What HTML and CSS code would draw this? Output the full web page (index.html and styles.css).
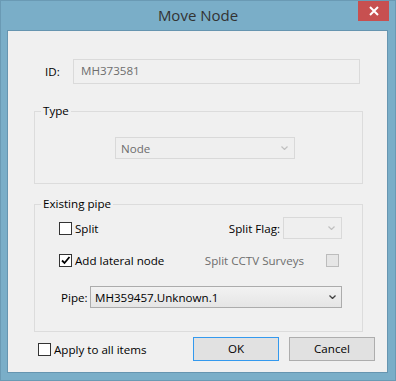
FILE: index.html
```html
<!DOCTYPE html>
<html lang="en">

<head>
    <meta charset="UTF-8">
    <meta name="viewport" content="width=device-width, initial-scale=1.0">
    <title>Move Node</title>
    <link rel="stylesheet" href="styles.css">
</head>

<body>

    <div class="window">
        <div class="titlebar">
            <div class="title">Move Node</div>
            <div class="close">
                <svg width="10" height="10" viewBox="0 0 10 10">
                    <path d="M1 1 L9 9 M9 1 L1 9" stroke="#fff" stroke-width="2" fill="none" />
                </svg>
            </div>
        </div>

        <div class="client">
            <div class="id-row">
                <span class="id-label">ID:</span>
                <div class="textbox disabled">MH373581</div>
            </div>

            <div class="group group-type">
                <span class="legend">Type</span>
                <div class="combo disabled type-combo">
                    <span>Node</span>
                    <svg class="arrow" width="7" height="4" viewBox="0 0 7 4">
                        <path d="M0.5 0.5 L3.5 3.5 L6.5 0.5" stroke="#c0c0c0" stroke-width="1.2" fill="none" />
                    </svg>
                </div>
            </div>

            <div class="group group-pipe">
                <span class="legend">Existing pipe</span>

                <div class="row">
                    <span class="check"></span>
                    <span class="check-text">Split</span>
                    <span class="flag-label">Split Flag:</span>
                    <div class="combo disabled flag-combo">
                        <span></span>
                        <svg class="arrow" width="7" height="4" viewBox="0 0 7 4">
                            <path d="M0.5 0.5 L3.5 3.5 L6.5 0.5" stroke="#c0c0c0" stroke-width="1.2" fill="none" />
                        </svg>
                    </div>
                </div>

                <div class="row row-lateral">
                    <span class="check">
                        <svg width="11" height="11" viewBox="0 0 11 11">
                            <path d="M2 5.5 L4.5 8 L9.5 2" stroke="#000" stroke-width="1.8" fill="none" />
                        </svg>
                    </span>
                    <span class="check-text">Add lateral node</span>
                    <span class="cctv-label">Split CCTV Surveys</span>
                    <span class="check disabled-check"></span>
                </div>

                <div class="row row-pipe">
                    <span class="pipe-label">Pipe:</span>
                    <div class="combo pipe-combo">
                        <span>MH359457.Unknown.1</span>
                        <svg class="arrow" width="7" height="4" viewBox="0 0 7 4">
                            <path d="M0.5 0.5 L3.5 3.5 L6.5 0.5" stroke="#404040" stroke-width="1.3" fill="none" />
                        </svg>
                    </div>
                </div>
            </div>

            <div class="footer">
                <span class="check"></span>
                <span class="check-text">Apply to all items</span>
                <button class="btn btn-default">OK</button>
                <button class="btn">Cancel</button>
            </div>
        </div>
    </div>

</body>

</html>
```

FILE: styles.css
```css
body {
    margin: 0;
    font-family: "Open Sans", "Noto Sans", sans-serif;
    font-size: 11.6px;
    color: #000;
}

.window {
    width: 396px;
    height: 381px;
    box-sizing: border-box;
    background-color: #7aaec8;
    border: 1px solid #6a9ab4;
    padding: 0 6px 7px;
}

.titlebar {
    display: grid;
    grid-template-columns: 1fr;
    height: 29px;
}

.title {
    grid-area: 1 / 1;
    justify-self: center;
    align-self: center;
    font-size: 15px;
    color: #333;
    padding-bottom: 1px;
}

.close {
    grid-area: 1 / 1;
    justify-self: end;
    align-self: start;
    width: 31px;
    height: 20px;
    background-color: #c75050;
    display: flex;
    justify-content: center;
    align-items: center;
}

.client {
    width: 381px;
    height: 343px;
    box-sizing: border-box;
    background-color: #f0f0f0;
    border: 1px solid #6695b0;
}

.id-row {
    display: flex;
    align-items: center;
    margin-top: 28px;
    padding-left: 37px;
}

.id-label {
    width: 28px;
}

.textbox {
    width: 287px;
    height: 25px;
    box-sizing: border-box;
    border: 1px solid #dadada;
    padding: 0 7px 3px;
    display: flex;
    align-items: center;
}

.disabled {
    color: #6d6d6d;
}

.group {
    position: relative;
    margin-left: 26px;
    width: 329px;
    box-sizing: border-box;
    border: 1px solid #dcdcdc;
}

.legend {
    position: absolute;
    top: -9px;
    left: 6px;
    padding: 0 2px;
    background-color: #f0f0f0;
    line-height: 16px;
}

.group-type {
    margin-top: 27px;
    height: 73px;
    padding-top: 25px;
}

.combo {
    height: 22px;
    box-sizing: border-box;
    border: 1px solid #d9d9d9;
    background-color: #efefef;
    display: flex;
    align-items: center;
    justify-content: space-between;
    padding: 0 6px 0 5px;
}

.type-combo {
    width: 180px;
    margin-left: 80px;
}

.group-pipe {
    margin-top: 20px;
    height: 128px;
    padding: 12px 20px 0 24px;
}

.row {
    display: flex;
    align-items: center;
    height: 22px;
}

.row-lateral {
    margin-top: 10px;
}

.row-pipe {
    margin-top: 15px;
    padding-left: 2px;
}

.check {
    width: 13px;
    height: 13px;
    box-sizing: border-box;
    border: 1px solid #333;
    background-color: #fff;
    display: flex;
    justify-content: center;
    align-items: center;
    flex-shrink: 0;
}

.check-text {
    margin-left: 3px;
}

.flag-label {
    margin-left: auto;
    margin-right: 3px;
}

.flag-combo {
    width: 59px;
}

.cctv-label {
    margin-left: auto;
    color: #6d6d6d;
}

.disabled-check {
    background-color: #e6e6e6;
    border-color: #bcbcbc;
    margin-left: 22px;
    margin-right: 3px;
}

.pipe-label {
    width: 29px;
}

.pipe-combo {
    width: 252px;
    border-color: #acacac;
    background: linear-gradient(#f2f2f2, #e5e5e5);
    padding-left: 4px;
    padding-right: 5px;
}

.footer {
    display: flex;
    align-items: center;
    margin-top: 5px;
    padding: 0 12px 0 30px;
}

.btn {
    width: 86px;
    height: 24px;
    border: 1px solid #adadad;
    background-color: #e1e1e1;
    font-family: inherit;
    font-size: 11.6px;
    color: #000;
    padding: 0 0 2px;
}

.btn-default {
    margin-left: auto;
    margin-right: 10px;
    border-color: #3399ee;
}
```
